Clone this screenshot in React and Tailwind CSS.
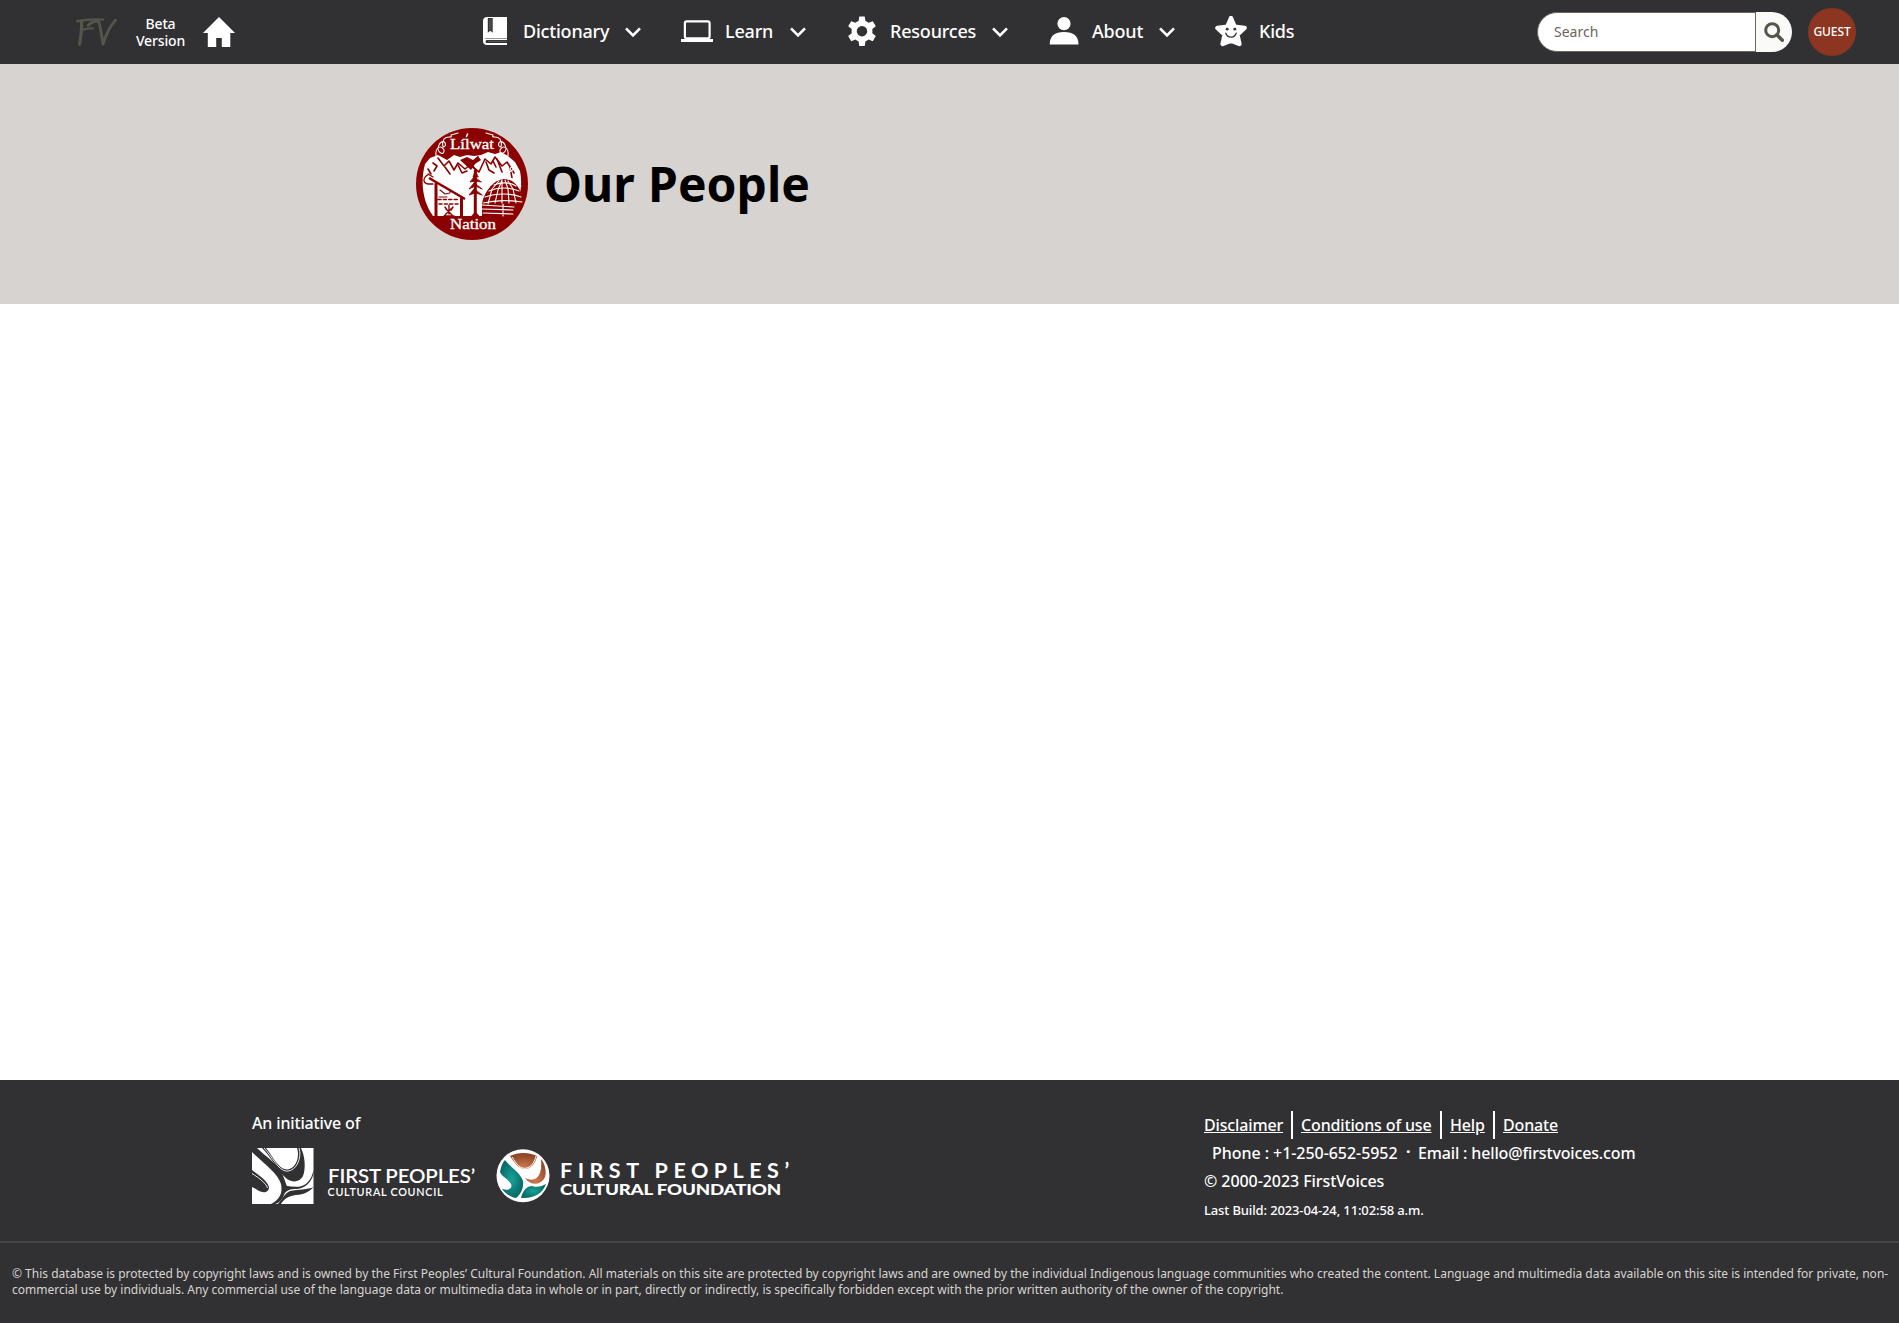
import React from "react";

const NOTO = "font-['Noto_Sans',sans-serif]";

function FVLogo() {
  return (
    <svg viewBox="0 0 41 28" className="h-7 w-[41px]" fill="none" stroke="#55564a" strokeLinecap="round">
      <path d="M1.200 3.200C10 1.500 19 1 27 1.600" strokeWidth="2.400" />
      <path d="M5.500 3C6 10 5.200 18 3.600 26.300" strokeWidth="3.200" />
      <path d="M4.600 12.400C9 11 13 10.200 17 10.400" strokeWidth="2" />
      <path d="M12 7.500C15 4 20 2.600 23 4C24.500 10 25.800 18 27 26C29.500 18 33.500 8.500 39.500 2.200" strokeWidth="2.800" strokeLinejoin="round" />
    </svg>
  );
}

const icons = {
  book: (
    <svg viewBox="0 0 32 32" className="size-8" fill="#fff">
      <path d="M8 1H28V22.500H7.500C6 22.500 5 23 4 24V5C4 2.500 5.500 1 8 1Z" />
      <path d="M4 23H28V28.900H8C5.500 28.900 4 27.500 4 25Z" />
      <path d="M8 23.900H28V27H8C6 27 6 23.900 8 23.900Z" fill="#313133" />
      <path d="M9 24.800H28V26H9Z" fill="#505052" />
      <path d="M8.800 2H13.700V16.800L11.300 14.800L8.800 16.800Z" fill="#313133" />
      <path d="M9.800 3H12.700V15L11.300 13.500L9.800 15Z" fill="#4a4a4c" />
    </svg>
  ),
  laptop: (
    <svg viewBox="0 0 32 32" className="size-8">
      <rect x="3.900" y="5.400" width="24.700" height="17" rx="1.800" fill="none" stroke="#fff" strokeWidth="2.200" />
      <rect x="0" y="23" width="32" height="3" fill="#fff" />
    </svg>
  ),
  gear: (
    <svg viewBox="0 0 32 32" className="size-8" fill="#fff" fillRule="evenodd">
      <path d="M13.300.500H18.700L19.400 5C20.600 5.400 21.600 6 22.600 6.800L26.800 5.200L29.800 10.300L26.300 13.100C26.500 14.600 26.500 16 26.300 17.200L29.800 20L26.800 25.200L22.600 23.600C21.600 24.400 20.600 25 19.400 25.400L18.700 29.900H13.300L12.600 25.400C11.400 25 10.400 24.400 9.400 23.600L5.200 25.200L2.200 20L5.700 17.200C5.500 16 5.500 14.600 5.700 13.100L2.200 10.300L5.200 5.200L9.400 6.800C10.400 6 11.400 5.400 12.600 5ZM16 9.900A5.200 5.200 0 1 0 16 20.400A5.200 5.200 0 1 0 16 9.900Z" />
    </svg>
  ),
  person: (
    <svg viewBox="0 0 32 32" className="size-8" fill="#fff">
      <circle cx="16" cy="7.700" r="6.600" />
      <path d="M1.700 28.600C1.700 20 6.500 16 16 16S30.500 20 30.500 28.600Z" />
    </svg>
  ),
  star: (
    <svg viewBox="0 0 32 32" className="size-8">
      <path d="M16 2L19.600 10.600L29.600 11.900L22.400 18.600L24.400 28L16 24.600L7.600 28L9.600 18.600L2.400 11.900L12.400 10.600Z" fill="#fff" stroke="#fff" strokeWidth="4.400" strokeLinejoin="round" />
      <circle cx="12.200" cy="13.200" r="1.400" fill="#313133" />
      <circle cx="19.800" cy="13.200" r="1.400" fill="#313133" />
      <path d="M10.800 17.200C12.500 22.300 19.500 22.300 21.200 17.200" fill="none" stroke="#313133" strokeWidth="1.300" strokeLinecap="round" />
    </svg>
  ),
};

const navItems = [
  { label: "Dictionary", icon: "book", width: "w-[86px]" },
  { label: "Learn", icon: "laptop", width: "w-[49px]" },
  { label: "Resources", icon: "gear", width: "w-[86px]" },
  { label: "About", icon: "person", width: "w-[51px]" },
  { label: "Kids", icon: "star", width: "w-9", leaf: true },
];

function NavItem({ item }) {
  return (
    <li className="flex h-16 items-center gap-3">
      {icons[item.icon]}
      <span className={`${item.width} pb-0.5 text-[18px] leading-7 font-medium tracking-[-0.2px] whitespace-nowrap`}>{item.label}</span>
      {!item.leaf && (
        <svg viewBox="0 0 24 24" className="size-6" fill="none" stroke="#fff" strokeWidth="2.600">
          <path d="M5 8.300L12 15.300L19 8.300" />
        </svg>
      )}
    </li>
  );
}

function Header() {
  return (
    <header className="flex h-16 bg-[#313133] text-white">
      <div className="flex w-[479px] items-center pl-[76px]">
        <FVLogo />
        <div className="ml-[13px] w-[61px] text-center text-[14px] leading-[17px] font-medium tracking-[-0.15px]">
          Beta<br />Version
        </div>
        <svg viewBox="0 0 32 30" className="ml-3 h-[30px] w-8" fill="#fff">
          <path d="M16 0L32 16H27.300V30H18.800V21H13.200V30H4.800V16H0Z" />
        </svg>
      </div>
      <ul className="flex gap-9">
        {navItems.map((item) => <NavItem key={item.label} item={item} />)}
      </ul>
      <div className="mr-[43px] ml-auto flex items-center gap-4">
        <div className="flex h-10 w-[255px]">
          <div className="flex flex-1 items-center rounded-l-[20px] border border-[#6b6659] bg-white pb-0.5 pl-4 text-[14px] text-[#6b6659]">Search</div>
          <div className="flex w-9 items-center justify-center rounded-r-[20px] bg-[#fafaf8]">
            <svg viewBox="0 0 20 20" className="size-5" fill="none" stroke="#55564a" strokeWidth="3">
              <circle cx="8.200" cy="8.200" r="6.500" />
              <path d="M12.800 12.800L18.300 18.300" strokeWidth="3.500" strokeLinecap="round" />
            </svg>
          </div>
        </div>
        <div className="flex size-12 items-center justify-center rounded-full bg-[#8c3621] text-[12px] font-medium tracking-[-0.1px]">GUEST</div>
      </div>
    </header>
  );
}

function NationSeal() {
  return (
    <svg viewBox="0 0 112 112" className="size-28" fill="none" stroke="#fff" strokeLinecap="round" strokeLinejoin="round">
      <circle cx="56" cy="56" r="56" fill="#8b0000" stroke="none" />
      <path d="M9 36L14 30L22 27L31 32L38 27L44 29L51 27L58 28L65 27L72 24L79 26L85 24L92 28L99 34L104 43C107 58 104 74 94 88H17C7 74 4 55 9 36Z" fill="#fff" stroke="none" />
      <g stroke="#8b0000" strokeWidth="1.600">
        <path d="M22 30L28 38L33 33L38 42L42 35L49 41L54 37L63 44L69 31L75 36L79 29L86 38L91 34L98 45" />
        <path d="M17 35L21 38L18 43M29 39L34 46M42 37L46 45L51 43M62 29L55 36L60 42M70 34L73 42L78 45M81 31L86 44M94 39L96 50M77 33L80 39M12 41L15 46" />
      </g>
      <path d="M44 32L51 29L57 32L62 28L65 32L59 36L55 42Z" fill="#8b0000" stroke="none" />
      <g stroke="#8b0000">
        <path d="M13 50L49 71" strokeWidth="2.600" strokeLinecap="butt" />
        <path d="M20 56V89M45.500 70V89" strokeWidth="3" />
        <path d="M13 46C7 49 6 55 12 56L17 56M12 46L17 49" strokeWidth="1.300" />
        <path d="M24 62L29 66L34 65V62M23 69H31" strokeWidth="1.100" />
        <path d="M22 71.500H43M23 76H42" strokeWidth="1.600" strokeDasharray="3 2.400" />
        <path d="M30 81L36 87M36 80L29 87M28 88H38M33 77V86M29 79L31 82M37 79L35 82" strokeWidth="1.400" />
        <path d="M59.300 43V89" strokeWidth="3" />
        <path d="M59.300 43L57 49H62ZM58 49L54 54L59.500 53L65 54ZM58 55L53 61L59.500 58L66 61ZM58 61L53 67L59.500 65L66 67Z" fill="#8b0000" strokeWidth=".8" />
        <path d="M55 89L59.300 84L64 89Z" fill="#8b0000" strokeWidth="1" />
      </g>
      <path d="M66 75C69 62 78 52 88 51C98 51 105 60 107 72L101 84L94 89H66Z" fill="#8b0000" stroke="none" />
      <g strokeWidth="1.100">
        <path d="M73 63C82 59 94 59 103 63M69 69C80 65 96 65 105 69M78 57C85 54 94 54 100 58M67 75C80 72 96 72 106 74" />
        <path d="M72 76L76 61L83 53M79 75L82 62L86 52M86 75V52M93 75L92 61L89 52M100 75L97 61L92 53" />
        <path d="M66 77L98 79M66 81L97 82M67 85L97 86M87 76V88" />
        <path d="M91 51C88 43 98 45 98 39C94 38 93 42 96 43M91 51C95 49 101 52 105 58" />
        <path d="M20 28C19 18 26 17 28 22C29 29 19 24 23 17C26 11 31 14 29 18C27 21 25 16 28 11C31 7 37 11 35 7M35 7L42 5" />
        <path d="M92 28C93 18 86 17 84 22C83 29 93 24 89 17C86 11 81 14 83 18C85 21 87 16 84 11C81 7 75 11 77 7M77 7L70 5" />
      </g>
      <g fill="#fff" strokeWidth=".35" className="font-['Liberation_Serif',serif]" fontSize="15.500">
        <text x="34" y="21" textLength="44" lengthAdjust="spacingAndGlyphs">Lílwat</text>
        <text x="34" y="101" textLength="46" lengthAdjust="spacingAndGlyphs">Nation</text>
      </g>
      <path d="M51.500 6L50.500 8.500" strokeWidth="1.500" />
    </svg>
  );
}

function Hero() {
  return (
    <section className="flex h-60 items-center bg-[#d7d3d0] pl-[416px]">
      <NationSeal />
      <h1 className="ml-4 text-[48px] leading-[60px] font-bold [word-spacing:1px] text-black">Our People</h1>
    </section>
  );
}

function CouncilLogo() {
  return (
    <svg viewBox="0 0 224 56" className="h-14 w-56">
      <rect width="61.500" height="56" fill="#fff" />
      <g fill="#313133">
        <path d="M0 0L5 0C12 7 22 13 28 22C32 28 33 34 35 38C42 39 50 40 55 35C59 31 60.500 27 61.500 22V26C59 35 53 40 45 41C38 41 34 42 32 47C30 52 27 55 23 56H19C27 52 31 46 29 36C26 25 10 14 0 4Z" />
        <path d="M10 0H14C20 7 26 21 35 21.500C44 21 48 9 45 0H49C53 8 54 21 51 28C48 34 41 35 35 31C26 24 21 11 10 0Z" />
        <path d="M0 22C6 27 15 32 17 39C17 45 11 45 7 43C4 41 2 40 0 39Z" />
        <path d="M61.500 39C56 42 46 41 38 43C33 45 31 50 26 56H29C32 51 36 48 44 47C52 47 58 43 61.500 39Z" />
      </g>
      <path d="M12 0C20 8 26 23 35 23.200C45 23 50 9 47 0" fill="none" stroke="#fff" strokeWidth=".9" />
      <path d="M0 25.500C7 30 14 35 15.500 40" fill="none" stroke="#fff" strokeWidth=".9" />
      <g fill="#fff" className="font-['Lato',sans-serif]">
        <text x="76" y="35" fontSize="18.800" className="font-semibold" textLength="147" lengthAdjust="spacingAndGlyphs">FIRST PEOPLES’</text>
        <text x="75.500" y="47.600" fontSize="10.800" className="font-semibold" textLength="115" lengthAdjust="spacing">CULTURAL COUNCIL</text>
      </g>
    </svg>
  );
}

function FoundationLogo() {
  return (
    <svg viewBox="0 0 294 56" className="h-14 w-[294px]">
      <defs>
        <radialGradient id="copper" cx=".5" cy=".9" r=".9"><stop offset="0" stopColor="#ce7850" /><stop offset="1" stopColor="#86401f" /></radialGradient>
        <radialGradient id="teal"><stop offset="0" stopColor="#17a39a" /><stop offset="1" stopColor="#096b68" /></radialGradient>
      </defs>
      <circle cx="27" cy="27.700" r="26.500" fill="#fff" />
      <path d="M14 8C22 4 33 4 41 8C40 14 36 20 30 21C23 22 18 14 14 8Z" fill="url(#copper)" />
      <path d="M16 9C20 15 24 22 31 20C37 18 39 12 40 8" fill="none" stroke="#fff" strokeWidth="1" />
      <path d="M45 11C50 17 51 27 48 31C43 38 34 37 29 30C39 35 47 29 45 11Z" fill="url(#copper)" />
      <path d="M9 12C14 19 24 24 27 33C28 41 24 47 20 50C14 49 9 45 6 41C12 43 17 41 15 36C12 31 6 29 4 24C5 19 6 15 9 12Z" fill="url(#teal)" />
      <path d="M4 27C10 31 14 33 14 37" stroke="#fff" fill="none" strokeWidth="1" />
      <path d="M50 36C47 45 38 51 25 50C27 42 31 38 36 38C42 40 46 38 50 36Z" fill="url(#teal)" />
      <g fill="#fff" className="font-['Lato',sans-serif]">
        <text x="64" y="29.600" fontSize="21.500" className="font-bold" textLength="229" lengthAdjust="spacing">FIRST PEOPLES’</text>
        <text x="64" y="46.700" fontSize="15.800" className="font-black" textLength="221" lengthAdjust="spacingAndGlyphs">CULTURAL FOUNDATION</text>
      </g>
    </svg>
  );
}

const links = [
  { label: "Disclaimer", width: "w-[79px]" },
  { label: "Conditions of use", width: "w-[131px]" },
  { label: "Help", width: "w-[35px]" },
  { label: "Donate", width: "w-[55px]" },
];

function Footer() {
  return (
    <footer className="h-[243px] bg-[#313133] text-white">
      <div className="flex h-[163px] border-b-2 border-[#47474a] pt-[31px] pl-[252px] text-[16px] leading-7 font-medium tracking-[-0.15px]">
        <div className="w-[952px]">
          <p className="leading-6">An initiative of</p>
          <div className="mt-[13px] flex gap-5">
            <CouncilLogo />
            <FoundationLogo />
          </div>
        </div>
        <div>
          <ul className="flex">
            {links.map((link, i) => (
              <li key={link.label} className={i ? "ml-2 border-l-2 border-white pl-2" : ""}>
                <a className={`${link.width} block whitespace-nowrap underline`}>{link.label}</a>
              </li>
            ))}
          </ul>
          <p className="flex pl-2">
            <span className="w-[186px] tracking-[-0.05px] whitespace-nowrap">Phone : +1-250-652-5952</span>
            <span className="-mt-0.5 w-[20px] pl-2 font-bold">·</span>
            <span>Email : hello@firstvoices.com</span>
          </p>
          <p className="tracking-[-0.07px]">© 2000-2023 FirstVoices</p>
          <p className="pt-px text-[13px] tracking-[-0.13px]">Last Build: 2023-04-24, 11:02:58 a.m.</p>
        </div>
      </div>
      <p className="px-3 pt-[23px] text-[12px] leading-4 tracking-[0.006px] whitespace-nowrap text-[#d7d3d0]">
        © This database is protected by copyright laws and is owned by the First Peoples’ Cultural Foundation. All materials on this site are protected by copyright laws and are owned by the individual Indigenous language communities who created the content. Language and multimedia data available on this site is intended for private, non-<br />commercial use by individuals. Any commercial use of the language data or multimedia data in whole or in part, directly or indirectly, is specifically forbidden except with the prior written authority of the owner of the copyright.
      </p>
    </footer>
  );
}

export default function App() {
  return (
    <div className={`${NOTO} flex h-[1323px] flex-col overflow-hidden bg-white`}>
      <Header />
      <Hero />
      <main className="flex-1" />
      <Footer />
    </div>
  );
}
